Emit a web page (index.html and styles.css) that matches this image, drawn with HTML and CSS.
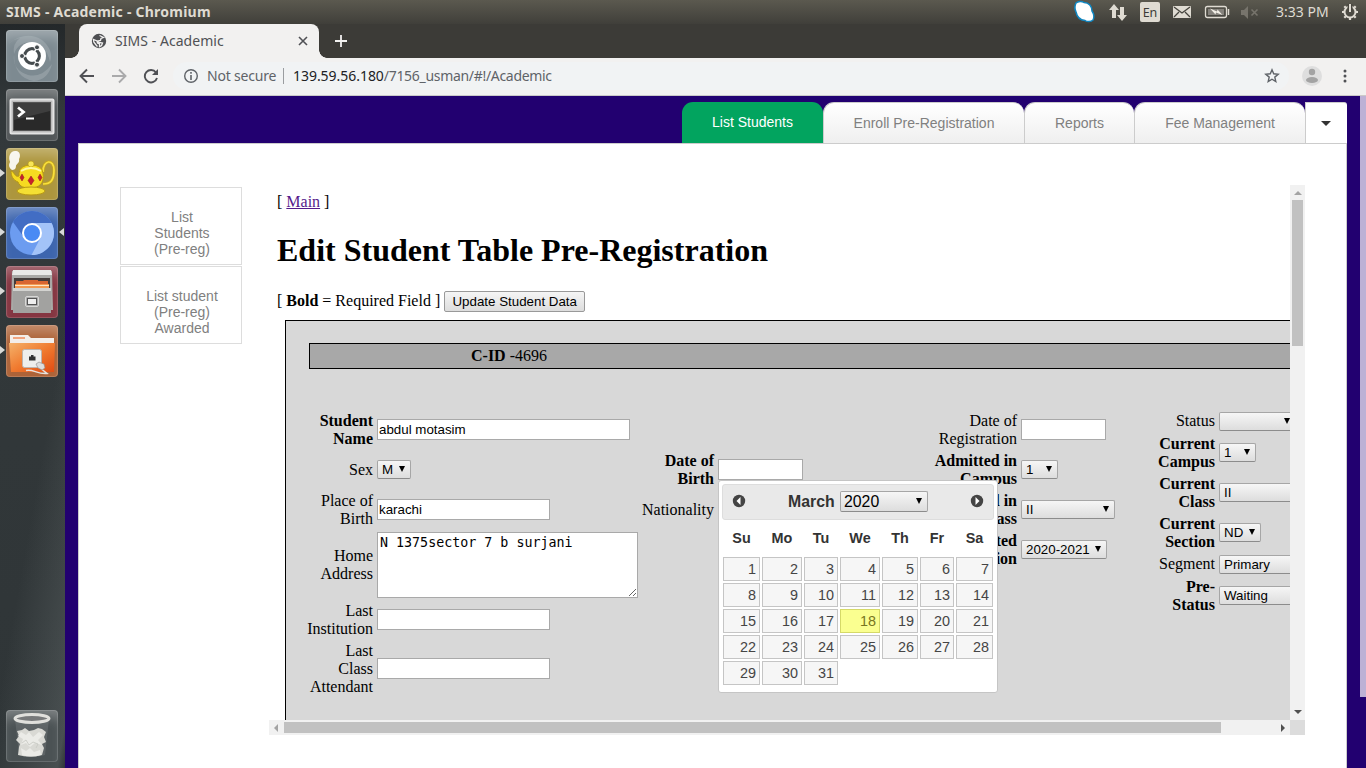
FILE: index.html
```html
<!DOCTYPE html>
<html lang="en">
<head>
<meta charset="utf-8">
<title>SIMS - Academic</title>
<link rel="stylesheet" href="styles.css">
</head>
<body>
<header class="panel">
  <span class="panel-title">SIMS - Academic - Chromium</span>
  <svg class="indicators" width="198" height="24" viewBox="-4 0 198 24">
    <path d="M0 3c2-2 6-2 8-.5 5 0 8 4 8 8.500 2 3 2.500 6 1 9-2 2-6 2-8 .5C4 20 1 17 0 12c-1.500-3-1.500-6 0-9z" fill="#fff" stroke="#1085bf" stroke-width="1.500"/>
    <g fill="#dfdbd2"><path d="M38 4l5 6h-3v8h-4v-8h-3zM46 21l-5-6h3V7h4v8h3z"/><rect x="64" y="2" width="20" height="20" rx="2"/><rect x="97" y="6" width="18" height="12" rx="1"/></g>
    <path d="M98 7l8 6 8-6M98 17l5-5M114 17l-5-5" fill="none" stroke="#45433d" stroke-width="1.300"/>
    <rect x="129.500" y="6.500" width="21" height="11" rx="2" fill="none" stroke="#dfdbd2" stroke-width="1.300"/><rect x="132" y="9" width="16" height="6" fill="#85827c"/><path d="M152.500 9v6" stroke="#dfdbd2" stroke-width="1.500"/><path d="M134 8.500l7 3 .5-2 5 5.500-6.500-2.500-.5 2z" fill="#f2eee6"/>
    <path d="M165 10h3l4-4v13l-4-4h-3z" fill="#77746c"/><path d="M175.500 9.500l6 6m0-6l-6 6" stroke="#77746c" stroke-width="1.600"/>
  </svg>
  <span class="lang">En</span>
  <span class="clock">3:33 PM</span>
  <svg class="gear" width="18" height="18" viewBox="0 0 18 18" fill="none" stroke="#dfdbd2"><circle cx="9" cy="9" r="5.500" stroke-width="2"/><path d="M9 1v8" stroke="#48463f" stroke-width="5"/><path d="M9 1v8" stroke-width="2"/><path d="M1 9h2m12 0h2M9 15v2M3.300 3.300l1.500 1.500m8.400 8.400l1.500 1.500m0-11.400l-1.500 1.500m-8.400 8.400l-1.500 1.500" stroke-width="2.200"/></svg>
</header>

<div class="desktop">
  <nav class="launcher">
    <div class="tile dash"><svg viewBox="0 0 52 52"><g fill="#c5ced2" fill-opacity=".28"><path d="M2 14Q20 0 36 10q12 10 8 22Q40 14 26 12 12 12 8 24 6 14 14 8 6 10 2 14z"/><path d="M8 24Q6 40 22 45 36 48 46 34 42 50 28 51 8 48 8 24z"/></g><circle cx="26" cy="26" r="14" fill="#fff"/><circle cx="26" cy="26" r="7.300" fill="none" stroke="#454b4e" stroke-width="3.200"/><path d="M26 26H13M26 26l6.500-11.300M26 26l6.500 11.300" stroke="#fff" stroke-width="1.500"/><circle cx="26" cy="26" r="5.500" fill="#fff"/><g fill="#454b4e" stroke="#fff"><circle cx="16" cy="26" r="2.500"/><circle cx="31" cy="17.300" r="2.500"/><circle cx="31" cy="34.700" r="2.500"/></g></svg></div>
    <div class="tile term"><svg viewBox="0 0 52 52"><rect x="4.500" y="10.500" width="43" height="34" rx="1" fill="#bbb" stroke="#e4e4e4" stroke-width="2"/><rect x="7.500" y="13.500" width="37" height="28" fill="#292929" stroke="#555"/><path d="M8 14h36v8L8 31z" fill="#666" opacity=".35"/><path d="M12 18.500l5.500 4.500-5.500 4.500" fill="none" stroke="#fff" stroke-width="2.800"/><path d="M20 29.500h8" stroke="#fff" stroke-width="2"/></svg></div>
    <div class="tile lamp running"><svg viewBox="0 0 52 52"><path d="M6 22c-4-3-3-6-2-8-2-5 0-11 5-11 5-1 6 5 4 8 1 4-3 5-3 7 0 3-2 4-4 4z" fill="#fff" opacity=".9"/><path d="M37 24c0-13 11-13 11-2 0 10-3 14-11 14" fill="none" stroke="#c6a81a" stroke-width="3"/><path d="M37 24c0-13 11-13 11-2 0 10-3 14-11 14" fill="none" stroke="#f8df3f" stroke-width="1.700"/><path d="M5 23c3 0 4 7 8 5v-3q1-8 12-8 11 0 12 8c2 11-5 15-12 15S14 39 12 34c-5-2-7-6-7-11z" fill="#f6db21" stroke="#b99913"/><ellipse cx="25" cy="43" rx="14" ry="4" fill="#f4df33" stroke="#b99913"/><circle cx="25" cy="16" r="3" fill="#f8e656" stroke="#b99913" stroke-width=".6"/><path d="M15 23q10-6 20 0" fill="none" stroke="#fff8a0" stroke-width="2"/><path d="M16 26l2 3.500-2 3.500-2-3.500zM25 28l3 4.500-3 4.500-3-4.500zM34 26l2 3.500-2 3.500-2-3.500z" fill="#c9202d" stroke="#8e1620" stroke-width=".5"/></svg></div>
    <div class="tile chromium running active"><svg viewBox="0 0 52 52"><circle cx="26" cy="26" r="22" fill="#6c9cf0"/><path d="M7 15a22 22 0 0 1 38 0l1 2H26l-9 12z" fill="#426dc4"/><path d="M26 16h19.600A22 22 0 0 1 25.500 48L35 30z" fill="#a3c3f8"/><circle cx="26" cy="26" r="9" fill="#4a8af4" stroke="#fff" stroke-width="2"/></svg></div>
    <div class="tile files running"><svg viewBox="0 0 52 52"><path d="M6 5h40l1 39H5z" fill="#a9a9a6"/><path d="M7 4h38l1 5H6z" fill="#e9e9e7"/><path d="M8 12h36v12H8z" fill="#453d3b"/><path d="M10 15h7l1-1h14v1h10v8H10z" fill="#d96631"/><path d="M9 18h34v5H9z" fill="#f29a51"/><path d="M9 19.500h34" stroke="#ffe5c4"/><path d="M7 22h38v25H7z" fill="#a2a2a0"/><path d="M7 22h38v3H7z" fill="#d3d3d0"/><rect x="19.500" y="30.500" width="13" height="10" rx="1.500" fill="#aaa" stroke="#d8d8d6"/><rect x="21.500" y="32.500" width="9" height="6" fill="#eee" stroke="#555"/></svg></div>
    <div class="tile network running"><svg viewBox="0 0 52 52"><defs><linearGradient id="folder" x2="1" y2="1"><stop stop-color="#f4b26b"/><stop offset=".5" stop-color="#f07b30"/><stop offset="1" stop-color="#e04b12"/></linearGradient></defs><path d="M4 10h18l3 3h23v8H4z" fill="#f3eee9"/><path d="M7 13h12" stroke="#f0a47f" stroke-width="2"/><path d="M3 18h46l-1 29H5z" fill="url(#folder)"/><rect x="16.500" y="24.500" width="19" height="18" rx="2" fill="#eeeeec" stroke="#bdb4ae"/><path d="M23 35.500v-4h2v-1.500h2.500v1.500h2v4z" fill="#333"/><path d="M20 45.500c7-2 11 4 21 3l-5-4" fill="none" stroke="#e6e2de" stroke-width="1.500"/><path d="M30 39l3-2 2 1 3 1 1 4-3 2-4-2z" fill="#ddd" stroke="#888" stroke-width=".6"/></svg></div>
    <div class="tile trash"><svg viewBox="0 0 52 52"><path d="M9 9h34l-4 36q-13 4-26 0z" fill="#fff" opacity=".1"/><path d="M11 21l5-1 3-2 4 3 5-1 4-2 4 1 4 3-2 5 2 5-4 2 2 4-2 7q-12 3-24 0l1-8 1-3-4-4 3-4z" fill="#d9d9d4"/><path d="M15 22l5 3 3-3 4 5 6-5 4 3-5 5 4 5-7-2-5 4-4-4-5 2 2-6-5-3zM15 38l5 3 4-3 4 4 6-2 1 5q-10 3-19 0z" fill="#ebebe7"/><path d="M16 33l4-3 3 5 4-3 5 2-2 4" fill="none" stroke="#c7c8c2" stroke-width=".8"/><ellipse cx="26" cy="8.500" rx="17" ry="4" fill="#77797a" stroke="#e0e0dc" stroke-width="3"/></svg></div>
  </nav>

  <main class="browser">
    <div class="tabstrip">
      <div class="btab">
        <svg width="16" height="16" viewBox="0 0 16 16"><circle cx="8" cy="8" r="7.200" fill="#4e4f52"/><path d="M8.500 2.500l4 2-2.500 1-.5 2-2.500.5 1 1.500 3.500.5-1 2.500-2 1.200V11L6.500 10 6 8 2.500 6.500 2.800 9l2.700 3.500 1 1" fill="none" stroke="#f2f1f0" stroke-width="1.300"/></svg>
        <span class="btab-title">SIMS - Academic</span>
        <svg class="btab-x" width="10" height="10" viewBox="0 0 10 10"><path d="M1 1l8 8m0-8L1 9" stroke="#505155" stroke-width="1.600"/></svg>
      </div>
      <svg class="plus" width="12" height="12" viewBox="0 0 12 12"><path d="M6 0v12M0 6h12" stroke="#f2f1f0" stroke-width="1.800"/></svg>
    </div>
    <div class="toolbar">
      <svg width="80" height="16" viewBox="0 0 80 16" fill="none" stroke-width="1.900"><path d="M15 8H2M8 1.500L1.500 8 8 14.500" stroke="#505155"/><path d="M33 8h13M40 1.500L46.500 8 40 14.500" stroke="#aaaaab"/><path d="M77 4.500A6.200 6.200 0 1 0 78 10" stroke="#505155"/><path d="M79 1v6h-6z" fill="#505155"/></svg>
      <div class="omnibox">
        <svg width="16" height="16" viewBox="0 0 16 16"><circle cx="8" cy="8" r="6.300" fill="none" stroke="#5f6368" stroke-width="1.400"/><path d="M8 7v5M8 4v1.700" stroke="#5f6368" stroke-width="1.600"/></svg>
        <span class="insecure">Not secure</span><i class="divider"></i>
        <span class="url"><b>139.59.56.180</b>/7156_usman/#!/Academic</span>
        <svg class="star" width="16" height="16" viewBox="0 0 16 16"><path d="M8 1.800l1.700 4 4.500.4-3.400 2.900 1 4.400L8 11.200l-3.800 2.300 1-4.400-3.400-2.900 4.500-.4z" fill="none" stroke="#5f6368" stroke-width="1.400"/></svg>
      </div>
      <svg class="avatar" width="20" height="20" viewBox="0 0 20 20"><circle cx="10" cy="10" r="10" fill="#dedede"/><circle cx="10" cy="6" r="3.200" fill="#a3a3a3"/><ellipse cx="10" cy="14" rx="6" ry="3" fill="#a3a3a3"/></svg>
      <svg class="menu" width="4" height="14" viewBox="0 0 4 14" fill="#505155"><circle cx="2" cy="2" r="1.500"/><circle cx="2" cy="7" r="1.500"/><circle cx="2" cy="12" r="1.500"/></svg>
    </div>

    <div class="page">
      <div class="site">
        <nav class="tabs">
          <a class="tab current t1">List Students</a><a class="tab t2">Enroll Pre-Registration</a><a class="tab t3">Reports</a><a class="tab t4">Fee Management</a><a class="tab more"><i class="caret"></i></a>
        </nav>
        <div class="content">
          <aside class="side">
            <a class="side-item">List<br>Students<br>(Pre-reg)</a>
            <a class="side-item">List student<br>(Pre-reg)<br>Awarded</a>
          </aside>
          <section class="frame">
            <div class="view">
              <div>[ <a class="main-link" href="#">Main</a> ]</div>
              <h1 class="heading">Edit Student Table Pre-Registration</h1>
              <div class="action"><span class="hint">[ <b>Bold</b> = Required Field ] </span><button class="update">Update Student Data</button></div>
              <div class="sheet">
                <div class="cid"><b>C-ID</b> -4696</div>
                <div class="form">
                  <div class="col c1">
                    <div class="row tall"><label class="label req">Student<br>Name</label><input class="field w253" value="abdul motasim"></div>
                    <div class="row tall"><label class="label">Sex</label><span class="select w34">M<i class="arrow"></i></span></div>
                    <div class="row tall"><label class="label">Place of<br>Birth</label><input class="field w173" value="karachi"></div>
                    <div class="row"><label class="label">Home<br>Address</label><textarea class="area">N 1375sector 7 b surjani</textarea></div>
                    <div class="row tall"><label class="label">Last<br>Institution</label><input class="field w173"></div>
                    <div class="row triple"><label class="label">Last<br>Class<br>Attendant</label><input class="field w173"></div>
                  </div>
                  <div class="col c2">
                    <div class="row tall"></div>
                    <div class="row tall"><label class="label req">Date of<br>Birth</label>
                      <div class="anchor"><input class="field w85">
                        <div class="picker">
                          <div class="picker-head">
                            <svg class="nav-dot" width="14" height="14" viewBox="0 0 14 14"><circle cx="7" cy="7" r="6.200" fill="#444"/><path d="M8.500 3v8L4.500 7z" fill="#fff"/></svg>
                            <span class="month">March</span><span class="select year">2020<i class="arrow"></i></span>
                            <svg class="nav-dot next" width="14" height="14" viewBox="0 0 14 14"><circle cx="7" cy="7" r="6.200" fill="#444"/><path d="M5.500 3v8L9.500 7z" fill="#fff"/></svg>
                          </div>
                          <div class="week names"><span>Su</span><span>Mo</span><span>Tu</span><span>We</span><span>Th</span><span>Fr</span><span>Sa</span></div>
                          <div class="week days"><a>1</a><a>2</a><a>3</a><a>4</a><a>5</a><a>6</a><a>7</a><a>8</a><a>9</a><a>10</a><a>11</a><a>12</a><a>13</a><a>14</a><a>15</a><a>16</a><a>17</a><a class="today">18</a><a>19</a><a>20</a><a>21</a><a>22</a><a>23</a><a>24</a><a>25</a><a>26</a><a>27</a><a>28</a><a>29</a><a>30</a><a>31</a></div>
                        </div>
                      </div>
                    </div>
                    <div class="row tall"><label class="label">Nationality</label></div>
                  </div>
                  <div class="col c3">
                    <div class="row tall"><label class="label">Date of<br>Registration</label><input class="field w85"></div>
                    <div class="row tall"><label class="label req">Admitted in<br>Campus</label><span class="select w37">1<i class="arrow"></i></span></div>
                    <div class="row tall"><label class="label req">Admitted in<br>Class</label><span class="select w94">II<i class="arrow"></i></span></div>
                    <div class="row tall"><label class="label req">Admitted<br>Session</label><span class="select w86">2020-2021<i class="arrow"></i></span></div>
                  </div>
                  <div class="col c4">
                    <div class="row single"><label class="label">Status</label><span class="select w77"><i class="arrow"></i></span></div>
                    <div class="row tall"><label class="label req">Current<br>Campus</label><span class="select w37">1<i class="arrow"></i></span></div>
                    <div class="row tall"><label class="label req">Current<br>Class</label><span class="select w94">II<i class="arrow"></i></span></div>
                    <div class="row tall"><label class="label req">Current<br>Section</label><span class="select w42">ND<i class="arrow"></i></span></div>
                    <div class="row single"><label class="label">Segment</label><span class="select w94">Primary<i class="arrow"></i></span></div>
                    <div class="row tall"><label class="label req">Pre-<br>Status</label><span class="select w94">Waiting<i class="arrow"></i></span></div>
                  </div>
                </div>
              </div>
            </div>
            <div class="vbar"><i class="up"></i><i class="vthumb"></i><i class="down"></i></div>
            <div class="hbar"><i class="left"></i><i class="hthumb"></i><i class="right"></i></div>
            <div class="corner"></div>
          </section>
        </div>
      </div>
      <div class="page-scroll"></div>
    </div>
  </main>
</div>
</body>
</html>
```
FILE: styles.css
```css
* { box-sizing: border-box; }
body { margin: 0; width: 1366px; height: 768px; overflow: hidden; display: flex; flex-direction: column; font-family: "Liberation Serif", serif; font-size: 16px; }
svg { display: block; flex: none; }

/* System panel */
.panel { position: relative; height: 24px; flex: none; display: flex; align-items: center; padding: 0 7px 0 6px; background: linear-gradient(#5b594f, #403f3a); color: #dfdbd2; font-family: "Noto Sans", sans-serif; }
.panel-title { font-size: 14px; font-weight: 700; line-height: 24px; white-space: nowrap; letter-spacing: .24px; }
.indicators { margin-left: auto; margin-right: 6px; }
.lang { position: absolute; left: 1140px; width: 20px; text-align: center; top: 3px; line-height: 19px; color: #3c3b37; font-size: 12.5px; }
.clock { width: 54px; font-size: 14px; letter-spacing: 0; line-height: 24px; white-space: nowrap; margin-right: 11px; }
.desktop { flex: 1; min-height: 0; display: flex; }

/* Launcher */
.launcher { width: 65px; flex: none; display: flex; flex-direction: column; gap: 7px; padding: 6px 0 6px 6px; background: linear-gradient(100deg, transparent 60%, rgba(120,128,128,.35) 96%, transparent), linear-gradient(#24282a, #33393b 12%, #2f3537); }
.tile { position: relative; width: 52px; height: 52px; flex: none; border-radius: 4px; box-shadow: inset 0 0 0 1px rgba(255,255,255,.15), inset 0 12px 12px -5px rgba(255,255,255,.28); }
.tile svg { width: 52px; height: 52px; }
.dash { background: #7d8a91; }
.term { background: #525759; }
.lamp { background: #ad963d; }
.chromium { background: #3d65ae; }
.files { background: #853541; }
.network { background: #ad6338; }
.trash { margin-top: auto; background: #4b5254; }
.running::before { content: ""; position: absolute; left: -6px; top: 21px; border: 4px solid transparent; border-left: 5px solid #d8dad8; border-right: 0; }
.active::after { content: ""; position: absolute; right: -6px; top: 21px; border: 4px solid transparent; border-right: 5px solid #d8dad8; border-left: 0; }

/* Browser chrome */
.browser { flex: 1; min-width: 0; display: flex; flex-direction: column; }
.tabstrip { height: 34px; flex: none; background: #3c3b37; display: flex; align-items: center; padding-left: 14px; font-family: "Noto Sans", sans-serif; }
.btab { position: relative; width: 240px; height: 34px; background: #f2f1f0; border-radius: 8px 8px 0 0; display: flex; align-items: center; padding: 0 11px 0 12px; gap: 8px; }
.btab::before, .btab::after { content: ""; position: absolute; bottom: 0; width: 8px; height: 8px; }
.btab::before { left: -8px; background: radial-gradient(circle at 0 0, transparent 7.5px, #f2f1f0 8px); }
.btab::after { right: -8px; background: radial-gradient(circle at 100% 0, transparent 7.5px, #f2f1f0 8px); }
.btab-title { font-size: 14px; color: #505155; white-space: nowrap; letter-spacing: .05px; padding-bottom: 2px; }
.btab-x { margin-left: auto; }
.plus { margin-left: 16px; }
.toolbar { height: 38px; flex: none; background: #f2f1f0; border-bottom: 1px solid #cbc9c8; display: flex; align-items: center; padding-left: 14px; padding-bottom: 1px; font-family: "Noto Sans", sans-serif; font-size: 14px; }
.omnibox { margin-left: 14px; width: 1116px; height: 28px; border-radius: 14px; background: #f1f3f4; display: flex; align-items: center; padding: 0 9px 0 10px; color: #5f6368; white-space: nowrap; }
.insecure { margin-left: 8px; width: 76px; letter-spacing: -.2px; padding-bottom: 1px; }
.divider { width: 1px; height: 16px; background: #9a9da0; margin-right: 9px; }
.url { letter-spacing: -.31px; padding-bottom: 1px; }
.url b { font-weight: 400; color: #202124; letter-spacing: -.04px; }
.star { margin-left: auto; }
.avatar { margin-left: 13px; }
.menu { margin-left: 21px; }

/* Site */
.page { flex: 1; min-height: 0; display: flex; background: #220070; padding: 6px 0 0 13px; font-family: "Liberation Sans", Arial, sans-serif; }
.site { width: 1269px; flex: none; display: flex; flex-direction: column; }
.page-scroll { margin: -6px 0 0 13px; width: 6px; height: 601px; background: #bdb1d5; }
.tabs { height: 41px; flex: none; display: flex; justify-content: flex-end; }
.tab { height: 41px; border: 1px solid #ccc; border-width: 1px 0 0 1px; border-radius: 11px 11px 0 0; background: linear-gradient(#fff, #efefef); color: #808080; font-size: 14px; line-height: 41px; text-align: center; }
.current { background: #02a45f; color: #fff; border: 0; }
.t1 { width: 141px; }
.t2 { width: 201px; }
.t3 { width: 110px; }
.t4 { width: 171px; }
.more { width: 42px; background: #fff; border-radius: 0 3px 0 0; display: flex; align-items: center; justify-content: center; padding-right: 2px; }
.caret { border: 5px solid transparent; border-top-color: #333; border-bottom: 0; margin-top: 1px; }
.content { flex: 1; min-height: 0; background: #fff; border: 1px solid #ccc; border-bottom: 0; display: flex; align-items: flex-start; padding: 41px 0 0 41px; }
.side { width: 122px; flex: none; display: flex; flex-direction: column; gap: 1px; margin-top: 2px; }
.side-item { height: 78px; border: 1px solid #ddd; padding: 21px 0 0 2px; color: #808080; font-size: 14px; line-height: 16px; text-align: center; }
.frame { margin-left: 27px; width: 1036px; height: 550px; display: grid; grid-template: 535px 15px / 1021px 15px; font-family: "Liberation Serif", serif; line-height: 18px; }
.view { overflow: hidden; padding: 8px 0 0 8px; color: #000; }
.main-link { color: #551a8b; }
.heading { font-size: 32px; line-height: 37px; margin: 21px 0 22px; }
.action { height: 21px; display: flex; align-items: flex-start; white-space: pre; }
.hint { padding-top: 1px; }
.update { width: 141px; height: 21px; padding: 0; border: 1px solid #999; border-radius: 2px; background: linear-gradient(#f5f5f5, #ddd); color: #000; font: 13.333px "Liberation Sans", sans-serif; }
.sheet { margin: 8px 0 0 8px; width: 1240px; height: 500px; background: #d8d8d8; border: 1px solid #000; padding: 22px 21px 0; }
.cid { margin-left: 2px; height: 26px; border: 1px solid #000; background: #a8a8a8; padding-left: 161px; line-height: 24px; }
.form { margin-top: 43px; display: flex; align-items: flex-start; }
.col { display: flex; flex-direction: column; gap: 4px; flex: none; }
.c1 { width: 331px; }
.c2 { width: 279px; }
.c3 { width: 202px; }
.c4 { width: 240px; }
.row { display: flex; align-items: center; gap: 4px; }
.tall { height: 36px; }
.triple { height: 54px; }
.single { height: 19px; }
.label { flex: none; text-align: right; white-space: nowrap; }
.single .label { margin-bottom: 1px; }
.req { font-weight: 700; }
.c1 .label { width: 66px; }
.c2 .label { width: 76px; }
.c3 .label { width: 100px; }
.c4 .label { width: 96px; }
.field { display: block; height: 21px; margin: 0; padding: 1px; border: 1px solid #a9a9a9; border-radius: 0; background: #fff; color: #000; font: 13.333px "Liberation Sans", sans-serif; outline: 0; }
.tall > .field, .triple > .field, .tall > .select, .tall > .anchor { margin-bottom: 1px; }
.area { width: 261px; height: 66px; margin: 0; padding: 2px; border: 1px solid #a9a9a9; font: 13.333px "DejaVu Sans Mono", monospace; color: #000; background: #fff; }
.select { position: relative; display: block; height: 19px; border: 1px solid #a6a6a6; border-bottom-color: #8c8c8c; border-radius: 2px; background: linear-gradient(#f6f6f6, #ddd); padding-left: 4px; font: 13.333px/18px "Liberation Sans", sans-serif; color: #000; }
.arrow { position: absolute; right: 5px; top: 5px; border: 3.5px solid transparent; border-top: 6px solid #000; border-bottom: 0; }
.w34 { width: 34px; }
.w37 { width: 37px; }
.w42 { width: 42px; }
.w77 { width: 77px; }
.w85 { width: 85px; }
.w86 { width: 86px; }
.w94 { width: 94px; }
.w173 { width: 173px; }
.w253 { width: 253px; }

/* Date picker */
.anchor { position: relative; }
.picker { position: absolute; z-index: 2; left: 0; top: 21px; width: 280px; height: 213px; padding: 3px; background: #fff; border: 1px solid #c5c5c5; border-radius: 3px; font-family: "Liberation Sans", sans-serif; }
.picker-head { height: 36px; border: 1px solid #ddd; border-radius: 3px; background: #e9e9e9; display: flex; align-items: center; padding: 0 9px; }
.nav-dot { margin-bottom: 2px; }
.month { margin-left: 42px; width: 52px; color: #333; font-weight: 700; font-size: 15.84px; }
.year { width: 88px; height: 21px; font-size: 15.84px; line-height: 20px; margin-bottom: 2px; padding-left: 3px; }
.year .arrow { top: 6px; }
.next { margin-left: auto; }
.week { display: grid; grid-template-columns: 37px 40px 34px 40px 36px 34px 37px; gap: 2px; margin-left: 1px; font-size: 14.4px; }
.names { height: 37px; line-height: 36px; text-align: center; font-weight: 700; color: #333; }
.days a { height: 24px; border: 1px solid #c5c5c5; background: #f6f6f6; color: #454545; line-height: 23px; text-align: right; padding-right: 3px; }
.days .today { background: #faff90; border-color: #d5d968; color: #777620; }

/* Scrollbars */
.vbar { background: #f1f1f1; display: flex; flex-direction: column; align-items: center; }
.vthumb { width: 11px; height: 146px; background: #c1c1c1; margin-top: 5px; }
.up { border: 4px solid transparent; border-bottom-color: #a3a3a3; border-top: 0; margin-top: 6px; }
.down { border: 4px solid transparent; border-top-color: #505050; border-bottom: 0; margin: auto 0 6px; }
.hbar { background: #f1f1f1; display: flex; align-items: center; }
.left { border: 4px solid transparent; border-right-color: #a3a3a3; border-left: 0; margin-left: 5px; }
.hthumb { width: 937px; height: 11px; background: #c1c1c1; margin-left: 6px; }
.right { border: 4px solid transparent; border-left-color: #505050; border-right: 0; margin: 0 5px 0 auto; }
.corner { background: #dcdcdc; }
```
